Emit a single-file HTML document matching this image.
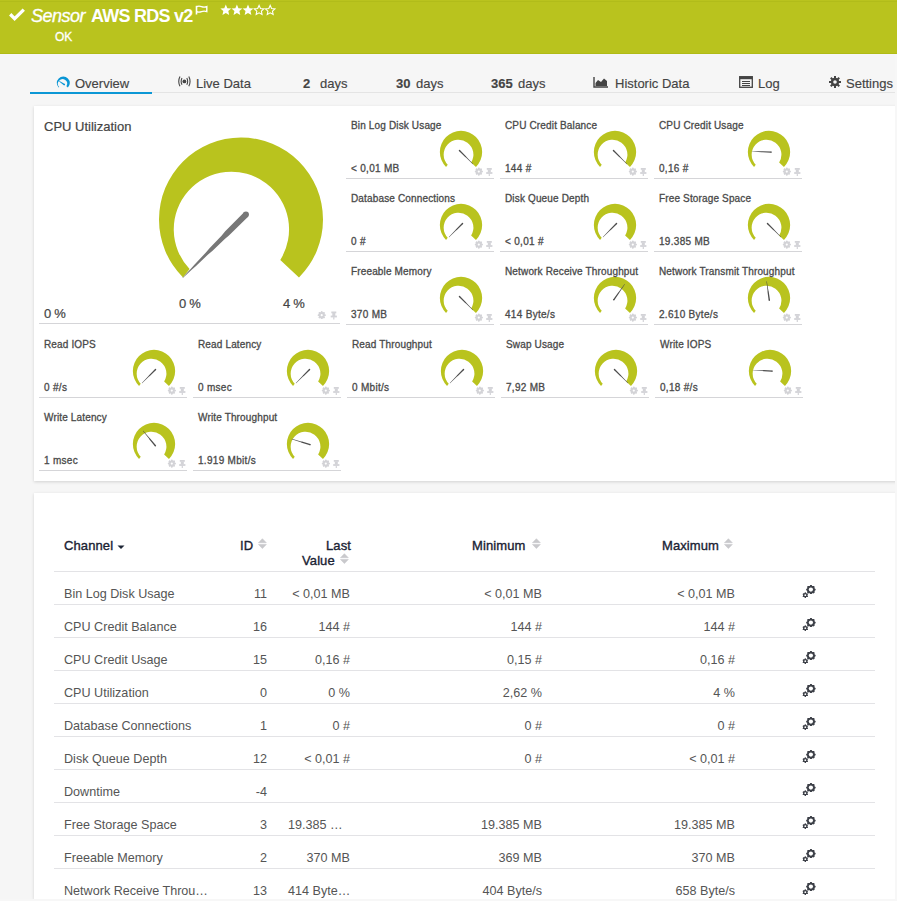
<!DOCTYPE html>
<html><head><meta charset="utf-8">
<style>
html,body{margin:0;padding:0;}
body{width:897px;height:901px;overflow:hidden;background:#f6f6f6;position:relative;font-family:"Liberation Sans",sans-serif;}
.abs{position:absolute;}
#hdr{position:absolute;left:0;top:0;width:897px;height:54px;background:#b9c31e;box-sizing:border-box;border-bottom:1px solid #b0bb16;}
#hdrl{position:absolute;left:0;top:1px;width:897px;height:1px;background:#b1bc1a;}
.wt{position:absolute;color:#fff;white-space:nowrap;line-height:1;}
.tab{position:absolute;top:77px;font-size:13px;color:#444;white-space:nowrap;line-height:1;-webkit-text-stroke:0.15px #444;}
.tab b{color:#444;}
#tabline{position:absolute;left:30px;top:92px;width:865px;height:1px;background:#e4e4e4;}
#tabsel{position:absolute;left:30px;top:92px;width:122px;height:2px;background:#0c97d5;}
.panel{position:absolute;left:34px;width:880px;background:#fff;box-shadow:0 1px 3px rgba(0,0,0,0.15);}
.gsvg{position:absolute;left:0;top:0;}
.gt{position:absolute;font-size:10px;color:#4a4a4a;white-space:nowrap;line-height:1;letter-spacing:0.15px;-webkit-text-stroke:0.3px #4a4a4a;}
.gv{position:absolute;font-size:10px;color:#4a4a4a;white-space:nowrap;line-height:1;letter-spacing:0.3px;-webkit-text-stroke:0.3px #4a4a4a;}
.big{position:absolute;font-size:13px;color:#444;white-space:nowrap;line-height:1;-webkit-text-stroke:0.2px #444;}
.th{position:absolute;font-size:13px;font-weight:normal;color:#1a2233;white-space:nowrap;line-height:1;letter-spacing:0.1px;-webkit-text-stroke:0.35px #1a2233;}
.tr{position:absolute;left:0;width:897px;height:16px;font-size:12.6px;color:#555;line-height:1;}
.tr span{position:absolute;white-space:nowrap;top:0;}
.c0{left:64px;}
.c1{right:630px;}
.c2{right:547px;}
.c3{right:355px;}
.c4{right:162px;}
</style></head><body>
<div id="hdr"></div><div id="hdrl"></div>
<svg class="abs" style="left:9px;top:8px" width="16" height="13" viewBox="0 0 16 13"><path d="M1.2 6.3 L5.6 10.6 L14.8 1.6" fill="none" stroke="#fff" stroke-width="3.3"/></svg>
<div class="wt" style="left:31px;top:7px;font-size:18px;font-style:italic;letter-spacing:-0.5px;-webkit-text-stroke:0.3px #fff;">Sensor</div>
<div class="wt" style="left:91px;top:7px;font-size:18px;font-weight:bold;letter-spacing:-0.75px;">AWS RDS v2</div>
<svg class="abs" style="left:195px;top:5px" width="14" height="10" viewBox="0 0 14 10"><path d="M1.5 0.8 V9.5" stroke="#fff" stroke-width="1.6" fill="none"/><path d="M1.5 1.6 Q4 0.6 6.5 1.6 T11.8 1.6 V6.6 Q9.2 5.6 6.5 6.6 T1.5 6.6" stroke="#fff" stroke-width="1.4" fill="none"/></svg>
<svg class="abs" style="left:220px;top:4px" width="57" height="12" viewBox="0 0 57 12"><polygon points="5.80,0.60 7.33,4.20 11.22,4.54 8.27,7.10 9.15,10.91 5.80,8.90 2.45,10.91 3.33,7.10 0.38,4.54 4.27,4.20" fill="#fff"/><polygon points="16.90,0.60 18.43,4.20 22.32,4.54 19.37,7.10 20.25,10.91 16.90,8.90 13.55,10.91 14.43,7.10 11.48,4.54 15.37,4.20" fill="#fff"/><polygon points="28.00,0.60 29.53,4.20 33.42,4.54 30.47,7.10 31.35,10.91 28.00,8.90 24.65,10.91 25.53,7.10 22.58,4.54 26.47,4.20" fill="#fff"/><polygon points="39.10,1.40 40.51,4.46 43.86,4.85 41.38,7.14 42.04,10.45 39.10,8.80 36.16,10.45 36.82,7.14 34.34,4.85 37.69,4.46" fill="none" stroke="#fff" stroke-width="1.1" stroke-linejoin="miter"/><polygon points="50.20,1.40 51.61,4.46 54.96,4.85 52.48,7.14 53.14,10.45 50.20,8.80 47.26,10.45 47.92,7.14 45.44,4.85 48.79,4.46" fill="none" stroke="#fff" stroke-width="1.1" stroke-linejoin="miter"/></svg>
<div class="wt" style="left:55px;top:31px;font-size:12px;-webkit-text-stroke:0.3px #fff;">OK</div>

<div id="tabline"></div>
<div id="tabsel"></div>
<div class="tab" style="left:75px">Overview</div>
<svg class="abs" style="left:177px;top:76px" width="15" height="11" viewBox="0 0 15 11"><circle cx="7.4" cy="5.4" r="1.9" fill="#444"/><path d="M5 2 Q3.3 5.4 5 8.8 M9.8 2 Q11.5 5.4 9.8 8.8 M3 0.6 Q0.5 5.4 3 10.2 M11.8 0.6 Q14.3 5.4 11.8 10.2" fill="none" stroke="#444" stroke-width="1.1"/></svg>
<div class="tab" style="left:196px">Live Data</div>
<div class="tab" style="left:303px"><b>2</b></div><div class="tab" style="left:320px">days</div>
<div class="tab" style="left:396px"><b>30</b></div><div class="tab" style="left:416px">days</div>
<div class="tab" style="left:491px"><b>365</b></div><div class="tab" style="left:518px">days</div>
<svg class="abs" style="left:593px;top:76px" width="16" height="12" viewBox="0 0 16 12"><path d="M1 1 V11 H15" fill="none" stroke="#444" stroke-width="1.4"/><path d="M2.5 10 V7 L5 4 L8 6 L11 2.5 L14 5 V10 Z" fill="#444"/></svg>
<div class="tab" style="left:615px">Historic Data</div>
<svg class="abs" style="left:739px;top:76px" width="14" height="12" viewBox="0 0 14 12"><rect x="0.7" y="0.7" width="12.6" height="10.6" fill="none" stroke="#444" stroke-width="1.3"/><rect x="0.7" y="0.7" width="12.6" height="2.5" fill="#444"/><path d="M3 5.5 H11 M3 7.5 H11 M3 9.5 H11" stroke="#444" stroke-width="1"/></svg>
<div class="tab" style="left:758px">Log</div>
<svg class="abs" style="left:829px;top:76px" width="12" height="12" viewBox="0 0 12 12"><g fill="#444"><circle cx="6" cy="6" r="4.2"/><rect x="5" y="0" width="2" height="12"/><rect x="5" y="0" width="2" height="12" transform="rotate(45 6 6)"/><rect x="5" y="0" width="2" height="12" transform="rotate(90 6 6)"/><rect x="5" y="0" width="2" height="12" transform="rotate(135 6 6)"/></g><circle cx="6" cy="6" r="1.8" fill="#f5f5f5"/></svg>
<div class="tab" style="left:846px">Settings</div>

<div class="panel" style="top:106px;height:375px;"></div>
<div class="panel" style="top:493px;height:406px;"></div>

<svg class="gsvg" width="897" height="901" viewBox="0 0 897 901"><path d="M58.70 87.60 A6.50 6.50 0 1 1 67.90 87.60 L66.41 86.20 A4.57 4.57 0 1 0 59.22 86.93 Z" fill="#0a96d5"/><polygon points="64.75,83.94 59.52,80.95 59.13,81.54 63.85,85.26" fill="#0a96d5"/><circle cx="64.30" cy="84.60" r="0.80" fill="#0a96d5"/><path d="M183.02 277.48 A82.00 82.00 0 1 1 298.98 277.48 L280.28 259.93 A57.65 57.65 0 1 0 189.59 269.03 Z" fill="#b9c31e"/><polygon points="243.83,212.43 224.98,231.56 221.54,235.71 209.73,247.94 205.65,252.73 194.61,264.47 191.06,268.52 182.52,277.69 182.81,277.98 191.98,269.44 196.03,265.89 207.77,254.85 212.56,250.77 224.79,238.96 228.94,235.52 248.07,216.67" fill="#777"/><circle cx="245.95" cy="214.55" r="3.00" fill="#777"/><rect x="39" y="323" width="301" height="1" fill="#d5d5d8"/><g fill="#d3d3d7"><circle cx="321.7" cy="315.2" r="3.10"/><rect x="320.95" y="311.30" width="1.50" height="7.80" rx="0.4" transform="rotate(0.0 321.7 315.2)"/><rect x="320.95" y="311.30" width="1.50" height="7.80" rx="0.4" transform="rotate(45.0 321.7 315.2)"/><rect x="320.95" y="311.30" width="1.50" height="7.80" rx="0.4" transform="rotate(90.0 321.7 315.2)"/><rect x="320.95" y="311.30" width="1.50" height="7.80" rx="0.4" transform="rotate(135.0 321.7 315.2)"/><rect x="320.95" y="311.30" width="1.50" height="7.80" rx="0.4" transform="rotate(180.0 321.7 315.2)"/><rect x="320.95" y="311.30" width="1.50" height="7.80" rx="0.4" transform="rotate(225.0 321.7 315.2)"/><rect x="320.95" y="311.30" width="1.50" height="7.80" rx="0.4" transform="rotate(270.0 321.7 315.2)"/><rect x="320.95" y="311.30" width="1.50" height="7.80" rx="0.4" transform="rotate(315.0 321.7 315.2)"/></g><circle cx="321.7" cy="315.2" r="1.10" fill="#fff"/><g fill="#d3d3d7"><rect x="331.30" y="311.50" width="5" height="1.8"/><rect x="332.30" y="313.00" width="3" height="3"/><rect x="330.70" y="315.60" width="6.2" height="1.8"/><rect x="333.20" y="317.10" width="1.2" height="2.4"/></g><path d="M446.04 166.96 A21.15 21.15 0 1 1 475.96 166.96 L471.13 162.43 A14.87 14.87 0 1 0 447.74 164.77 Z" fill="#b9c31e"/><polygon points="458.95,150.94 465.13,156.98 465.91,157.55 472.88,164.16 473.16,163.88 466.55,156.91 465.98,156.13 459.94,149.95" fill="#4d4d4d"/><circle cx="459.44" cy="150.44" r="0.70" fill="#4d4d4d"/><rect x="346" y="178" width="148" height="1" fill="#d5d5d8"/><g fill="#d3d3d7"><circle cx="478.8" cy="171.6" r="3.10"/><rect x="478.05" y="167.70" width="1.50" height="7.80" rx="0.4" transform="rotate(0.0 478.8 171.6)"/><rect x="478.05" y="167.70" width="1.50" height="7.80" rx="0.4" transform="rotate(45.0 478.8 171.6)"/><rect x="478.05" y="167.70" width="1.50" height="7.80" rx="0.4" transform="rotate(90.0 478.8 171.6)"/><rect x="478.05" y="167.70" width="1.50" height="7.80" rx="0.4" transform="rotate(135.0 478.8 171.6)"/><rect x="478.05" y="167.70" width="1.50" height="7.80" rx="0.4" transform="rotate(180.0 478.8 171.6)"/><rect x="478.05" y="167.70" width="1.50" height="7.80" rx="0.4" transform="rotate(225.0 478.8 171.6)"/><rect x="478.05" y="167.70" width="1.50" height="7.80" rx="0.4" transform="rotate(270.0 478.8 171.6)"/><rect x="478.05" y="167.70" width="1.50" height="7.80" rx="0.4" transform="rotate(315.0 478.8 171.6)"/></g><circle cx="478.8" cy="171.6" r="1.10" fill="#fff"/><g fill="#d3d3d7"><rect x="486.80" y="168.00" width="5" height="1.8"/><rect x="487.80" y="169.50" width="3" height="3"/><rect x="486.20" y="172.10" width="6.2" height="1.8"/><rect x="488.70" y="173.60" width="1.2" height="2.4"/></g><path d="M600.04 166.96 A21.15 21.15 0 1 1 629.96 166.96 L625.13 162.43 A14.87 14.87 0 1 0 601.74 164.77 Z" fill="#b9c31e"/><polygon points="612.95,150.94 619.13,156.98 619.91,157.55 626.88,164.16 627.16,163.88 620.55,156.91 619.98,156.13 613.94,149.95" fill="#4d4d4d"/><circle cx="613.44" cy="150.44" r="0.70" fill="#4d4d4d"/><rect x="500" y="178" width="148" height="1" fill="#d5d5d8"/><g fill="#d3d3d7"><circle cx="632.8" cy="171.6" r="3.10"/><rect x="632.05" y="167.70" width="1.50" height="7.80" rx="0.4" transform="rotate(0.0 632.8 171.6)"/><rect x="632.05" y="167.70" width="1.50" height="7.80" rx="0.4" transform="rotate(45.0 632.8 171.6)"/><rect x="632.05" y="167.70" width="1.50" height="7.80" rx="0.4" transform="rotate(90.0 632.8 171.6)"/><rect x="632.05" y="167.70" width="1.50" height="7.80" rx="0.4" transform="rotate(135.0 632.8 171.6)"/><rect x="632.05" y="167.70" width="1.50" height="7.80" rx="0.4" transform="rotate(180.0 632.8 171.6)"/><rect x="632.05" y="167.70" width="1.50" height="7.80" rx="0.4" transform="rotate(225.0 632.8 171.6)"/><rect x="632.05" y="167.70" width="1.50" height="7.80" rx="0.4" transform="rotate(270.0 632.8 171.6)"/><rect x="632.05" y="167.70" width="1.50" height="7.80" rx="0.4" transform="rotate(315.0 632.8 171.6)"/></g><circle cx="632.8" cy="171.6" r="1.10" fill="#fff"/><g fill="#d3d3d7"><rect x="640.80" y="168.00" width="5" height="1.8"/><rect x="641.80" y="169.50" width="3" height="3"/><rect x="640.20" y="172.10" width="6.2" height="1.8"/><rect x="642.70" y="173.60" width="1.2" height="2.4"/></g><path d="M754.04 166.96 A21.15 21.15 0 1 1 783.96 166.96 L779.13 162.43 A14.87 14.87 0 1 0 755.74 164.77 Z" fill="#b9c31e"/><polygon points="771.22,151.38 762.58,151.18 761.62,151.29 752.02,151.21 752.00,151.61 761.59,152.19 762.54,152.37 771.17,152.78" fill="#4d4d4d"/><circle cx="771.20" cy="152.08" r="0.70" fill="#4d4d4d"/><rect x="654" y="178" width="148" height="1" fill="#d5d5d8"/><g fill="#d3d3d7"><circle cx="786.8" cy="171.6" r="3.10"/><rect x="786.05" y="167.70" width="1.50" height="7.80" rx="0.4" transform="rotate(0.0 786.8 171.6)"/><rect x="786.05" y="167.70" width="1.50" height="7.80" rx="0.4" transform="rotate(45.0 786.8 171.6)"/><rect x="786.05" y="167.70" width="1.50" height="7.80" rx="0.4" transform="rotate(90.0 786.8 171.6)"/><rect x="786.05" y="167.70" width="1.50" height="7.80" rx="0.4" transform="rotate(135.0 786.8 171.6)"/><rect x="786.05" y="167.70" width="1.50" height="7.80" rx="0.4" transform="rotate(180.0 786.8 171.6)"/><rect x="786.05" y="167.70" width="1.50" height="7.80" rx="0.4" transform="rotate(225.0 786.8 171.6)"/><rect x="786.05" y="167.70" width="1.50" height="7.80" rx="0.4" transform="rotate(270.0 786.8 171.6)"/><rect x="786.05" y="167.70" width="1.50" height="7.80" rx="0.4" transform="rotate(315.0 786.8 171.6)"/></g><circle cx="786.8" cy="171.6" r="1.10" fill="#fff"/><g fill="#d3d3d7"><rect x="794.80" y="168.00" width="5" height="1.8"/><rect x="795.80" y="169.50" width="3" height="3"/><rect x="794.20" y="172.10" width="6.2" height="1.8"/><rect x="796.70" y="173.60" width="1.2" height="2.4"/></g><path d="M446.04 239.96 A21.15 21.15 0 1 1 475.96 239.96 L471.13 235.43 A14.87 14.87 0 1 0 447.74 237.77 Z" fill="#b9c31e"/><polygon points="462.06,222.95 456.02,229.13 455.45,229.91 448.84,236.88 449.12,237.16 456.09,230.55 456.87,229.98 463.05,223.94" fill="#4d4d4d"/><circle cx="462.56" cy="223.44" r="0.70" fill="#4d4d4d"/><rect x="346" y="251" width="148" height="1" fill="#d5d5d8"/><g fill="#d3d3d7"><circle cx="478.8" cy="244.6" r="3.10"/><rect x="478.05" y="240.70" width="1.50" height="7.80" rx="0.4" transform="rotate(0.0 478.8 244.6)"/><rect x="478.05" y="240.70" width="1.50" height="7.80" rx="0.4" transform="rotate(45.0 478.8 244.6)"/><rect x="478.05" y="240.70" width="1.50" height="7.80" rx="0.4" transform="rotate(90.0 478.8 244.6)"/><rect x="478.05" y="240.70" width="1.50" height="7.80" rx="0.4" transform="rotate(135.0 478.8 244.6)"/><rect x="478.05" y="240.70" width="1.50" height="7.80" rx="0.4" transform="rotate(180.0 478.8 244.6)"/><rect x="478.05" y="240.70" width="1.50" height="7.80" rx="0.4" transform="rotate(225.0 478.8 244.6)"/><rect x="478.05" y="240.70" width="1.50" height="7.80" rx="0.4" transform="rotate(270.0 478.8 244.6)"/><rect x="478.05" y="240.70" width="1.50" height="7.80" rx="0.4" transform="rotate(315.0 478.8 244.6)"/></g><circle cx="478.8" cy="244.6" r="1.10" fill="#fff"/><g fill="#d3d3d7"><rect x="486.80" y="241.00" width="5" height="1.8"/><rect x="487.80" y="242.50" width="3" height="3"/><rect x="486.20" y="245.10" width="6.2" height="1.8"/><rect x="488.70" y="246.60" width="1.2" height="2.4"/></g><path d="M600.04 239.96 A21.15 21.15 0 1 1 629.96 239.96 L625.13 235.43 A14.87 14.87 0 1 0 601.74 237.77 Z" fill="#b9c31e"/><polygon points="616.06,222.95 610.02,229.13 609.45,229.91 602.84,236.88 603.12,237.16 610.09,230.55 610.87,229.98 617.05,223.94" fill="#4d4d4d"/><circle cx="616.56" cy="223.44" r="0.70" fill="#4d4d4d"/><rect x="500" y="251" width="148" height="1" fill="#d5d5d8"/><g fill="#d3d3d7"><circle cx="632.8" cy="244.6" r="3.10"/><rect x="632.05" y="240.70" width="1.50" height="7.80" rx="0.4" transform="rotate(0.0 632.8 244.6)"/><rect x="632.05" y="240.70" width="1.50" height="7.80" rx="0.4" transform="rotate(45.0 632.8 244.6)"/><rect x="632.05" y="240.70" width="1.50" height="7.80" rx="0.4" transform="rotate(90.0 632.8 244.6)"/><rect x="632.05" y="240.70" width="1.50" height="7.80" rx="0.4" transform="rotate(135.0 632.8 244.6)"/><rect x="632.05" y="240.70" width="1.50" height="7.80" rx="0.4" transform="rotate(180.0 632.8 244.6)"/><rect x="632.05" y="240.70" width="1.50" height="7.80" rx="0.4" transform="rotate(225.0 632.8 244.6)"/><rect x="632.05" y="240.70" width="1.50" height="7.80" rx="0.4" transform="rotate(270.0 632.8 244.6)"/><rect x="632.05" y="240.70" width="1.50" height="7.80" rx="0.4" transform="rotate(315.0 632.8 244.6)"/></g><circle cx="632.8" cy="244.6" r="1.10" fill="#fff"/><g fill="#d3d3d7"><rect x="640.80" y="241.00" width="5" height="1.8"/><rect x="641.80" y="242.50" width="3" height="3"/><rect x="640.20" y="245.10" width="6.2" height="1.8"/><rect x="642.70" y="246.60" width="1.2" height="2.4"/></g><path d="M754.04 239.96 A21.15 21.15 0 1 1 783.96 239.96 L779.13 235.43 A14.87 14.87 0 1 0 755.74 237.77 Z" fill="#b9c31e"/><polygon points="766.95,223.94 773.13,229.98 773.91,230.55 780.88,237.16 781.16,236.88 774.55,229.91 773.98,229.13 767.94,222.95" fill="#4d4d4d"/><circle cx="767.44" cy="223.44" r="0.70" fill="#4d4d4d"/><rect x="654" y="251" width="148" height="1" fill="#d5d5d8"/><g fill="#d3d3d7"><circle cx="786.8" cy="244.6" r="3.10"/><rect x="786.05" y="240.70" width="1.50" height="7.80" rx="0.4" transform="rotate(0.0 786.8 244.6)"/><rect x="786.05" y="240.70" width="1.50" height="7.80" rx="0.4" transform="rotate(45.0 786.8 244.6)"/><rect x="786.05" y="240.70" width="1.50" height="7.80" rx="0.4" transform="rotate(90.0 786.8 244.6)"/><rect x="786.05" y="240.70" width="1.50" height="7.80" rx="0.4" transform="rotate(135.0 786.8 244.6)"/><rect x="786.05" y="240.70" width="1.50" height="7.80" rx="0.4" transform="rotate(180.0 786.8 244.6)"/><rect x="786.05" y="240.70" width="1.50" height="7.80" rx="0.4" transform="rotate(225.0 786.8 244.6)"/><rect x="786.05" y="240.70" width="1.50" height="7.80" rx="0.4" transform="rotate(270.0 786.8 244.6)"/><rect x="786.05" y="240.70" width="1.50" height="7.80" rx="0.4" transform="rotate(315.0 786.8 244.6)"/></g><circle cx="786.8" cy="244.6" r="1.10" fill="#fff"/><g fill="#d3d3d7"><rect x="794.80" y="241.00" width="5" height="1.8"/><rect x="795.80" y="242.50" width="3" height="3"/><rect x="794.20" y="245.10" width="6.2" height="1.8"/><rect x="796.70" y="246.60" width="1.2" height="2.4"/></g><path d="M446.04 312.96 A21.15 21.15 0 1 1 475.96 312.96 L471.13 308.43 A14.87 14.87 0 1 0 447.74 310.77 Z" fill="#b9c31e"/><polygon points="458.95,296.94 465.13,302.98 465.91,303.55 472.88,310.16 473.16,309.88 466.55,302.91 465.98,302.13 459.94,295.95" fill="#4d4d4d"/><circle cx="459.44" cy="296.44" r="0.70" fill="#4d4d4d"/><rect x="346" y="324" width="148" height="1" fill="#d5d5d8"/><g fill="#d3d3d7"><circle cx="478.8" cy="317.6" r="3.10"/><rect x="478.05" y="313.70" width="1.50" height="7.80" rx="0.4" transform="rotate(0.0 478.8 317.6)"/><rect x="478.05" y="313.70" width="1.50" height="7.80" rx="0.4" transform="rotate(45.0 478.8 317.6)"/><rect x="478.05" y="313.70" width="1.50" height="7.80" rx="0.4" transform="rotate(90.0 478.8 317.6)"/><rect x="478.05" y="313.70" width="1.50" height="7.80" rx="0.4" transform="rotate(135.0 478.8 317.6)"/><rect x="478.05" y="313.70" width="1.50" height="7.80" rx="0.4" transform="rotate(180.0 478.8 317.6)"/><rect x="478.05" y="313.70" width="1.50" height="7.80" rx="0.4" transform="rotate(225.0 478.8 317.6)"/><rect x="478.05" y="313.70" width="1.50" height="7.80" rx="0.4" transform="rotate(270.0 478.8 317.6)"/><rect x="478.05" y="313.70" width="1.50" height="7.80" rx="0.4" transform="rotate(315.0 478.8 317.6)"/></g><circle cx="478.8" cy="317.6" r="1.10" fill="#fff"/><g fill="#d3d3d7"><rect x="486.80" y="314.00" width="5" height="1.8"/><rect x="487.80" y="315.50" width="3" height="3"/><rect x="486.20" y="318.10" width="6.2" height="1.8"/><rect x="488.70" y="319.60" width="1.2" height="2.4"/></g><path d="M600.04 312.96 A21.15 21.15 0 1 1 629.96 312.96 L625.13 308.43 A14.87 14.87 0 1 0 601.74 310.77 Z" fill="#b9c31e"/><polygon points="614.31,300.20 619.19,293.07 619.61,292.20 624.91,284.19 624.59,283.96 618.88,291.68 618.20,292.38 613.16,299.40" fill="#4d4d4d"/><circle cx="613.74" cy="299.80" r="0.70" fill="#4d4d4d"/><rect x="500" y="324" width="148" height="1" fill="#d5d5d8"/><g fill="#d3d3d7"><circle cx="632.8" cy="317.6" r="3.10"/><rect x="632.05" y="313.70" width="1.50" height="7.80" rx="0.4" transform="rotate(0.0 632.8 317.6)"/><rect x="632.05" y="313.70" width="1.50" height="7.80" rx="0.4" transform="rotate(45.0 632.8 317.6)"/><rect x="632.05" y="313.70" width="1.50" height="7.80" rx="0.4" transform="rotate(90.0 632.8 317.6)"/><rect x="632.05" y="313.70" width="1.50" height="7.80" rx="0.4" transform="rotate(135.0 632.8 317.6)"/><rect x="632.05" y="313.70" width="1.50" height="7.80" rx="0.4" transform="rotate(180.0 632.8 317.6)"/><rect x="632.05" y="313.70" width="1.50" height="7.80" rx="0.4" transform="rotate(225.0 632.8 317.6)"/><rect x="632.05" y="313.70" width="1.50" height="7.80" rx="0.4" transform="rotate(270.0 632.8 317.6)"/><rect x="632.05" y="313.70" width="1.50" height="7.80" rx="0.4" transform="rotate(315.0 632.8 317.6)"/></g><circle cx="632.8" cy="317.6" r="1.10" fill="#fff"/><g fill="#d3d3d7"><rect x="640.80" y="314.00" width="5" height="1.8"/><rect x="641.80" y="315.50" width="3" height="3"/><rect x="640.20" y="318.10" width="6.2" height="1.8"/><rect x="642.70" y="319.60" width="1.2" height="2.4"/></g><path d="M754.04 312.96 A21.15 21.15 0 1 1 783.96 312.96 L779.13 308.43 A14.87 14.87 0 1 0 755.74 310.77 Z" fill="#b9c31e"/><polygon points="770.00,300.08 768.70,291.54 768.42,290.61 766.83,281.14 766.44,281.19 767.52,290.73 767.51,291.71 768.61,300.28" fill="#4d4d4d"/><circle cx="769.31" cy="300.18" r="0.70" fill="#4d4d4d"/><rect x="654" y="324" width="148" height="1" fill="#d5d5d8"/><g fill="#d3d3d7"><circle cx="786.8" cy="317.6" r="3.10"/><rect x="786.05" y="313.70" width="1.50" height="7.80" rx="0.4" transform="rotate(0.0 786.8 317.6)"/><rect x="786.05" y="313.70" width="1.50" height="7.80" rx="0.4" transform="rotate(45.0 786.8 317.6)"/><rect x="786.05" y="313.70" width="1.50" height="7.80" rx="0.4" transform="rotate(90.0 786.8 317.6)"/><rect x="786.05" y="313.70" width="1.50" height="7.80" rx="0.4" transform="rotate(135.0 786.8 317.6)"/><rect x="786.05" y="313.70" width="1.50" height="7.80" rx="0.4" transform="rotate(180.0 786.8 317.6)"/><rect x="786.05" y="313.70" width="1.50" height="7.80" rx="0.4" transform="rotate(225.0 786.8 317.6)"/><rect x="786.05" y="313.70" width="1.50" height="7.80" rx="0.4" transform="rotate(270.0 786.8 317.6)"/><rect x="786.05" y="313.70" width="1.50" height="7.80" rx="0.4" transform="rotate(315.0 786.8 317.6)"/></g><circle cx="786.8" cy="317.6" r="1.10" fill="#fff"/><g fill="#d3d3d7"><rect x="794.80" y="314.00" width="5" height="1.8"/><rect x="795.80" y="315.50" width="3" height="3"/><rect x="794.20" y="318.10" width="6.2" height="1.8"/><rect x="796.70" y="319.60" width="1.2" height="2.4"/></g><path d="M139.04 385.96 A21.15 21.15 0 1 1 168.96 385.96 L164.13 381.43 A14.87 14.87 0 1 0 140.74 383.77 Z" fill="#b9c31e"/><polygon points="155.06,368.95 149.02,375.13 148.45,375.91 141.84,382.88 142.12,383.16 149.09,376.55 149.87,375.98 156.05,369.94" fill="#4d4d4d"/><circle cx="155.56" cy="369.44" r="0.70" fill="#4d4d4d"/><rect x="39" y="397" width="148" height="1" fill="#d5d5d8"/><g fill="#d3d3d7"><circle cx="171.8" cy="390.6" r="3.10"/><rect x="171.05" y="386.70" width="1.50" height="7.80" rx="0.4" transform="rotate(0.0 171.8 390.6)"/><rect x="171.05" y="386.70" width="1.50" height="7.80" rx="0.4" transform="rotate(45.0 171.8 390.6)"/><rect x="171.05" y="386.70" width="1.50" height="7.80" rx="0.4" transform="rotate(90.0 171.8 390.6)"/><rect x="171.05" y="386.70" width="1.50" height="7.80" rx="0.4" transform="rotate(135.0 171.8 390.6)"/><rect x="171.05" y="386.70" width="1.50" height="7.80" rx="0.4" transform="rotate(180.0 171.8 390.6)"/><rect x="171.05" y="386.70" width="1.50" height="7.80" rx="0.4" transform="rotate(225.0 171.8 390.6)"/><rect x="171.05" y="386.70" width="1.50" height="7.80" rx="0.4" transform="rotate(270.0 171.8 390.6)"/><rect x="171.05" y="386.70" width="1.50" height="7.80" rx="0.4" transform="rotate(315.0 171.8 390.6)"/></g><circle cx="171.8" cy="390.6" r="1.10" fill="#fff"/><g fill="#d3d3d7"><rect x="179.80" y="387.00" width="5" height="1.8"/><rect x="180.80" y="388.50" width="3" height="3"/><rect x="179.20" y="391.10" width="6.2" height="1.8"/><rect x="181.70" y="392.60" width="1.2" height="2.4"/></g><path d="M293.04 385.96 A21.15 21.15 0 1 1 322.96 385.96 L318.13 381.43 A14.87 14.87 0 1 0 294.74 383.77 Z" fill="#b9c31e"/><polygon points="309.06,368.95 303.02,375.13 302.45,375.91 295.84,382.88 296.12,383.16 303.09,376.55 303.87,375.98 310.05,369.94" fill="#4d4d4d"/><circle cx="309.56" cy="369.44" r="0.70" fill="#4d4d4d"/><rect x="193" y="397" width="148" height="1" fill="#d5d5d8"/><g fill="#d3d3d7"><circle cx="325.8" cy="390.6" r="3.10"/><rect x="325.05" y="386.70" width="1.50" height="7.80" rx="0.4" transform="rotate(0.0 325.8 390.6)"/><rect x="325.05" y="386.70" width="1.50" height="7.80" rx="0.4" transform="rotate(45.0 325.8 390.6)"/><rect x="325.05" y="386.70" width="1.50" height="7.80" rx="0.4" transform="rotate(90.0 325.8 390.6)"/><rect x="325.05" y="386.70" width="1.50" height="7.80" rx="0.4" transform="rotate(135.0 325.8 390.6)"/><rect x="325.05" y="386.70" width="1.50" height="7.80" rx="0.4" transform="rotate(180.0 325.8 390.6)"/><rect x="325.05" y="386.70" width="1.50" height="7.80" rx="0.4" transform="rotate(225.0 325.8 390.6)"/><rect x="325.05" y="386.70" width="1.50" height="7.80" rx="0.4" transform="rotate(270.0 325.8 390.6)"/><rect x="325.05" y="386.70" width="1.50" height="7.80" rx="0.4" transform="rotate(315.0 325.8 390.6)"/></g><circle cx="325.8" cy="390.6" r="1.10" fill="#fff"/><g fill="#d3d3d7"><rect x="333.80" y="387.00" width="5" height="1.8"/><rect x="334.80" y="388.50" width="3" height="3"/><rect x="333.20" y="391.10" width="6.2" height="1.8"/><rect x="335.70" y="392.60" width="1.2" height="2.4"/></g><path d="M447.04 385.96 A21.15 21.15 0 1 1 476.96 385.96 L472.13 381.43 A14.87 14.87 0 1 0 448.74 383.77 Z" fill="#b9c31e"/><polygon points="463.06,368.95 457.02,375.13 456.45,375.91 449.84,382.88 450.12,383.16 457.09,376.55 457.87,375.98 464.05,369.94" fill="#4d4d4d"/><circle cx="463.56" cy="369.44" r="0.70" fill="#4d4d4d"/><rect x="347" y="397" width="148" height="1" fill="#d5d5d8"/><g fill="#d3d3d7"><circle cx="479.8" cy="390.6" r="3.10"/><rect x="479.05" y="386.70" width="1.50" height="7.80" rx="0.4" transform="rotate(0.0 479.8 390.6)"/><rect x="479.05" y="386.70" width="1.50" height="7.80" rx="0.4" transform="rotate(45.0 479.8 390.6)"/><rect x="479.05" y="386.70" width="1.50" height="7.80" rx="0.4" transform="rotate(90.0 479.8 390.6)"/><rect x="479.05" y="386.70" width="1.50" height="7.80" rx="0.4" transform="rotate(135.0 479.8 390.6)"/><rect x="479.05" y="386.70" width="1.50" height="7.80" rx="0.4" transform="rotate(180.0 479.8 390.6)"/><rect x="479.05" y="386.70" width="1.50" height="7.80" rx="0.4" transform="rotate(225.0 479.8 390.6)"/><rect x="479.05" y="386.70" width="1.50" height="7.80" rx="0.4" transform="rotate(270.0 479.8 390.6)"/><rect x="479.05" y="386.70" width="1.50" height="7.80" rx="0.4" transform="rotate(315.0 479.8 390.6)"/></g><circle cx="479.8" cy="390.6" r="1.10" fill="#fff"/><g fill="#d3d3d7"><rect x="487.80" y="387.00" width="5" height="1.8"/><rect x="488.80" y="388.50" width="3" height="3"/><rect x="487.20" y="391.10" width="6.2" height="1.8"/><rect x="489.70" y="392.60" width="1.2" height="2.4"/></g><path d="M601.04 385.96 A21.15 21.15 0 1 1 630.96 385.96 L626.13 381.43 A14.87 14.87 0 1 0 602.74 383.77 Z" fill="#b9c31e"/><polygon points="613.95,369.94 620.13,375.98 620.91,376.55 627.88,383.16 628.16,382.88 621.55,375.91 620.98,375.13 614.94,368.95" fill="#4d4d4d"/><circle cx="614.44" cy="369.44" r="0.70" fill="#4d4d4d"/><rect x="501" y="397" width="148" height="1" fill="#d5d5d8"/><g fill="#d3d3d7"><circle cx="633.8" cy="390.6" r="3.10"/><rect x="633.05" y="386.70" width="1.50" height="7.80" rx="0.4" transform="rotate(0.0 633.8 390.6)"/><rect x="633.05" y="386.70" width="1.50" height="7.80" rx="0.4" transform="rotate(45.0 633.8 390.6)"/><rect x="633.05" y="386.70" width="1.50" height="7.80" rx="0.4" transform="rotate(90.0 633.8 390.6)"/><rect x="633.05" y="386.70" width="1.50" height="7.80" rx="0.4" transform="rotate(135.0 633.8 390.6)"/><rect x="633.05" y="386.70" width="1.50" height="7.80" rx="0.4" transform="rotate(180.0 633.8 390.6)"/><rect x="633.05" y="386.70" width="1.50" height="7.80" rx="0.4" transform="rotate(225.0 633.8 390.6)"/><rect x="633.05" y="386.70" width="1.50" height="7.80" rx="0.4" transform="rotate(270.0 633.8 390.6)"/><rect x="633.05" y="386.70" width="1.50" height="7.80" rx="0.4" transform="rotate(315.0 633.8 390.6)"/></g><circle cx="633.8" cy="390.6" r="1.10" fill="#fff"/><g fill="#d3d3d7"><rect x="641.80" y="387.00" width="5" height="1.8"/><rect x="642.80" y="388.50" width="3" height="3"/><rect x="641.20" y="391.10" width="6.2" height="1.8"/><rect x="643.70" y="392.60" width="1.2" height="2.4"/></g><path d="M755.04 385.96 A21.15 21.15 0 1 1 784.96 385.96 L780.13 381.43 A14.87 14.87 0 1 0 756.74 383.77 Z" fill="#b9c31e"/><polygon points="772.23,370.42 763.60,370.06 762.63,370.16 753.03,369.91 753.01,370.31 762.59,371.06 763.54,371.26 772.16,371.81" fill="#4d4d4d"/><circle cx="772.20" cy="371.12" r="0.70" fill="#4d4d4d"/><rect x="655" y="397" width="148" height="1" fill="#d5d5d8"/><g fill="#d3d3d7"><circle cx="787.8" cy="390.6" r="3.10"/><rect x="787.05" y="386.70" width="1.50" height="7.80" rx="0.4" transform="rotate(0.0 787.8 390.6)"/><rect x="787.05" y="386.70" width="1.50" height="7.80" rx="0.4" transform="rotate(45.0 787.8 390.6)"/><rect x="787.05" y="386.70" width="1.50" height="7.80" rx="0.4" transform="rotate(90.0 787.8 390.6)"/><rect x="787.05" y="386.70" width="1.50" height="7.80" rx="0.4" transform="rotate(135.0 787.8 390.6)"/><rect x="787.05" y="386.70" width="1.50" height="7.80" rx="0.4" transform="rotate(180.0 787.8 390.6)"/><rect x="787.05" y="386.70" width="1.50" height="7.80" rx="0.4" transform="rotate(225.0 787.8 390.6)"/><rect x="787.05" y="386.70" width="1.50" height="7.80" rx="0.4" transform="rotate(270.0 787.8 390.6)"/><rect x="787.05" y="386.70" width="1.50" height="7.80" rx="0.4" transform="rotate(315.0 787.8 390.6)"/></g><circle cx="787.8" cy="390.6" r="1.10" fill="#fff"/><g fill="#d3d3d7"><rect x="795.80" y="387.00" width="5" height="1.8"/><rect x="796.80" y="388.50" width="3" height="3"/><rect x="795.20" y="391.10" width="6.2" height="1.8"/><rect x="797.70" y="392.60" width="1.2" height="2.4"/></g><path d="M139.04 458.96 A21.15 21.15 0 1 1 168.96 458.96 L164.13 454.43 A14.87 14.87 0 1 0 140.74 456.77 Z" fill="#b9c31e"/><polygon points="155.95,445.24 150.32,438.68 149.59,438.04 143.23,430.85 142.92,431.11 148.90,438.62 149.40,439.45 154.88,446.14" fill="#4d4d4d"/><circle cx="155.41" cy="445.69" r="0.70" fill="#4d4d4d"/><rect x="39" y="470" width="148" height="1" fill="#d5d5d8"/><g fill="#d3d3d7"><circle cx="171.8" cy="463.6" r="3.10"/><rect x="171.05" y="459.70" width="1.50" height="7.80" rx="0.4" transform="rotate(0.0 171.8 463.6)"/><rect x="171.05" y="459.70" width="1.50" height="7.80" rx="0.4" transform="rotate(45.0 171.8 463.6)"/><rect x="171.05" y="459.70" width="1.50" height="7.80" rx="0.4" transform="rotate(90.0 171.8 463.6)"/><rect x="171.05" y="459.70" width="1.50" height="7.80" rx="0.4" transform="rotate(135.0 171.8 463.6)"/><rect x="171.05" y="459.70" width="1.50" height="7.80" rx="0.4" transform="rotate(180.0 171.8 463.6)"/><rect x="171.05" y="459.70" width="1.50" height="7.80" rx="0.4" transform="rotate(225.0 171.8 463.6)"/><rect x="171.05" y="459.70" width="1.50" height="7.80" rx="0.4" transform="rotate(270.0 171.8 463.6)"/><rect x="171.05" y="459.70" width="1.50" height="7.80" rx="0.4" transform="rotate(315.0 171.8 463.6)"/></g><circle cx="171.8" cy="463.6" r="1.10" fill="#fff"/><g fill="#d3d3d7"><rect x="179.80" y="460.00" width="5" height="1.8"/><rect x="180.80" y="461.50" width="3" height="3"/><rect x="179.20" y="464.10" width="6.2" height="1.8"/><rect x="181.70" y="465.60" width="1.2" height="2.4"/></g><path d="M293.04 458.96 A21.15 21.15 0 1 1 322.96 458.96 L318.13 454.43 A14.87 14.87 0 1 0 294.74 456.77 Z" fill="#b9c31e"/><polygon points="310.31,443.97 302.02,441.54 301.05,441.41 291.80,438.84 291.68,439.22 300.79,442.27 301.67,442.69 309.90,445.31" fill="#4d4d4d"/><circle cx="310.10" cy="444.64" r="0.70" fill="#4d4d4d"/><rect x="193" y="470" width="148" height="1" fill="#d5d5d8"/><g fill="#d3d3d7"><circle cx="325.8" cy="463.6" r="3.10"/><rect x="325.05" y="459.70" width="1.50" height="7.80" rx="0.4" transform="rotate(0.0 325.8 463.6)"/><rect x="325.05" y="459.70" width="1.50" height="7.80" rx="0.4" transform="rotate(45.0 325.8 463.6)"/><rect x="325.05" y="459.70" width="1.50" height="7.80" rx="0.4" transform="rotate(90.0 325.8 463.6)"/><rect x="325.05" y="459.70" width="1.50" height="7.80" rx="0.4" transform="rotate(135.0 325.8 463.6)"/><rect x="325.05" y="459.70" width="1.50" height="7.80" rx="0.4" transform="rotate(180.0 325.8 463.6)"/><rect x="325.05" y="459.70" width="1.50" height="7.80" rx="0.4" transform="rotate(225.0 325.8 463.6)"/><rect x="325.05" y="459.70" width="1.50" height="7.80" rx="0.4" transform="rotate(270.0 325.8 463.6)"/><rect x="325.05" y="459.70" width="1.50" height="7.80" rx="0.4" transform="rotate(315.0 325.8 463.6)"/></g><circle cx="325.8" cy="463.6" r="1.10" fill="#fff"/><g fill="#d3d3d7"><rect x="333.80" y="460.00" width="5" height="1.8"/><rect x="334.80" y="461.50" width="3" height="3"/><rect x="333.20" y="464.10" width="6.2" height="1.8"/><rect x="335.70" y="465.60" width="1.2" height="2.4"/></g></svg>
<div class="big" style="left:44px;top:120px;">CPU Utilization</div>
<div class="big" style="left:44px;top:307px;letter-spacing:-0.3px;">0 %</div>
<div class="big" style="left:179px;top:297px;letter-spacing:-0.3px;">0 %</div>
<div class="big" style="left:283px;top:297px;letter-spacing:-0.3px;">4 %</div>
<div class="gt" style="left:351px;top:121.2px">Bin Log Disk Usage</div>
<div class="gv" style="left:351px;top:164.2px">< 0,01 MB</div>
<div class="gt" style="left:505px;top:121.2px">CPU Credit Balance</div>
<div class="gv" style="left:505px;top:164.2px">144 #</div>
<div class="gt" style="left:659px;top:121.2px">CPU Credit Usage</div>
<div class="gv" style="left:659px;top:164.2px">0,16 #</div>
<div class="gt" style="left:351px;top:194.2px">Database Connections</div>
<div class="gv" style="left:351px;top:237.2px">0 #</div>
<div class="gt" style="left:505px;top:194.2px">Disk Queue Depth</div>
<div class="gv" style="left:505px;top:237.2px">< 0,01 #</div>
<div class="gt" style="left:659px;top:194.2px">Free Storage Space</div>
<div class="gv" style="left:659px;top:237.2px">19.385 MB</div>
<div class="gt" style="left:351px;top:267.2px">Freeable Memory</div>
<div class="gv" style="left:351px;top:310.2px">370 MB</div>
<div class="gt" style="left:505px;top:267.2px">Network Receive Throughput</div>
<div class="gv" style="left:505px;top:310.2px">414 Byte/s</div>
<div class="gt" style="left:659px;top:267.2px">Network Transmit Throughput</div>
<div class="gv" style="left:659px;top:310.2px">2.610 Byte/s</div>
<div class="gt" style="left:44px;top:340.2px">Read IOPS</div>
<div class="gv" style="left:44px;top:383.2px">0 #/s</div>
<div class="gt" style="left:198px;top:340.2px">Read Latency</div>
<div class="gv" style="left:198px;top:383.2px">0 msec</div>
<div class="gt" style="left:352px;top:340.2px">Read Throughput</div>
<div class="gv" style="left:352px;top:383.2px">0 Mbit/s</div>
<div class="gt" style="left:506px;top:340.2px">Swap Usage</div>
<div class="gv" style="left:506px;top:383.2px">7,92 MB</div>
<div class="gt" style="left:660px;top:340.2px">Write IOPS</div>
<div class="gv" style="left:660px;top:383.2px">0,18 #/s</div>
<div class="gt" style="left:44px;top:413.2px">Write Latency</div>
<div class="gv" style="left:44px;top:456.2px">1 msec</div>
<div class="gt" style="left:198px;top:413.2px">Write Throughput</div>
<div class="gv" style="left:198px;top:456.2px">1.919 Mbit/s</div>

<svg class="gsvg" width="897" height="901" viewBox="0 0 897 901"><rect x="54" y="604" width="821" height="1" fill="#e3e3e6"/><g fill="#3d4048"><circle cx="810.9" cy="589.6" r="3.90"/><rect x="810.00" y="585.10" width="1.80" height="9.00" rx="0.4" transform="rotate(0.0 810.9 589.6)"/><rect x="810.00" y="585.10" width="1.80" height="9.00" rx="0.4" transform="rotate(45.0 810.9 589.6)"/><rect x="810.00" y="585.10" width="1.80" height="9.00" rx="0.4" transform="rotate(90.0 810.9 589.6)"/><rect x="810.00" y="585.10" width="1.80" height="9.00" rx="0.4" transform="rotate(135.0 810.9 589.6)"/><rect x="810.00" y="585.10" width="1.80" height="9.00" rx="0.4" transform="rotate(180.0 810.9 589.6)"/><rect x="810.00" y="585.10" width="1.80" height="9.00" rx="0.4" transform="rotate(225.0 810.9 589.6)"/><rect x="810.00" y="585.10" width="1.80" height="9.00" rx="0.4" transform="rotate(270.0 810.9 589.6)"/><rect x="810.00" y="585.10" width="1.80" height="9.00" rx="0.4" transform="rotate(315.0 810.9 589.6)"/></g><circle cx="810.9" cy="589.6" r="2.10" fill="#fff"/><g fill="#3d4048"><circle cx="805.3" cy="595.2" r="2.10"/><rect x="804.70" y="592.40" width="1.20" height="5.60" rx="0.4" transform="rotate(0.0 805.3 595.2)"/><rect x="804.70" y="592.40" width="1.20" height="5.60" rx="0.4" transform="rotate(60.0 805.3 595.2)"/><rect x="804.70" y="592.40" width="1.20" height="5.60" rx="0.4" transform="rotate(120.0 805.3 595.2)"/><rect x="804.70" y="592.40" width="1.20" height="5.60" rx="0.4" transform="rotate(180.0 805.3 595.2)"/><rect x="804.70" y="592.40" width="1.20" height="5.60" rx="0.4" transform="rotate(240.0 805.3 595.2)"/><rect x="804.70" y="592.40" width="1.20" height="5.60" rx="0.4" transform="rotate(300.0 805.3 595.2)"/></g><circle cx="805.3" cy="595.2" r="0.90" fill="#fff"/><rect x="54" y="637" width="821" height="1" fill="#e3e3e6"/><g fill="#3d4048"><circle cx="810.9" cy="622.6" r="3.90"/><rect x="810.00" y="618.10" width="1.80" height="9.00" rx="0.4" transform="rotate(0.0 810.9 622.6)"/><rect x="810.00" y="618.10" width="1.80" height="9.00" rx="0.4" transform="rotate(45.0 810.9 622.6)"/><rect x="810.00" y="618.10" width="1.80" height="9.00" rx="0.4" transform="rotate(90.0 810.9 622.6)"/><rect x="810.00" y="618.10" width="1.80" height="9.00" rx="0.4" transform="rotate(135.0 810.9 622.6)"/><rect x="810.00" y="618.10" width="1.80" height="9.00" rx="0.4" transform="rotate(180.0 810.9 622.6)"/><rect x="810.00" y="618.10" width="1.80" height="9.00" rx="0.4" transform="rotate(225.0 810.9 622.6)"/><rect x="810.00" y="618.10" width="1.80" height="9.00" rx="0.4" transform="rotate(270.0 810.9 622.6)"/><rect x="810.00" y="618.10" width="1.80" height="9.00" rx="0.4" transform="rotate(315.0 810.9 622.6)"/></g><circle cx="810.9" cy="622.6" r="2.10" fill="#fff"/><g fill="#3d4048"><circle cx="805.3" cy="628.2" r="2.10"/><rect x="804.70" y="625.40" width="1.20" height="5.60" rx="0.4" transform="rotate(0.0 805.3 628.2)"/><rect x="804.70" y="625.40" width="1.20" height="5.60" rx="0.4" transform="rotate(60.0 805.3 628.2)"/><rect x="804.70" y="625.40" width="1.20" height="5.60" rx="0.4" transform="rotate(120.0 805.3 628.2)"/><rect x="804.70" y="625.40" width="1.20" height="5.60" rx="0.4" transform="rotate(180.0 805.3 628.2)"/><rect x="804.70" y="625.40" width="1.20" height="5.60" rx="0.4" transform="rotate(240.0 805.3 628.2)"/><rect x="804.70" y="625.40" width="1.20" height="5.60" rx="0.4" transform="rotate(300.0 805.3 628.2)"/></g><circle cx="805.3" cy="628.2" r="0.90" fill="#fff"/><rect x="54" y="670" width="821" height="1" fill="#e3e3e6"/><g fill="#3d4048"><circle cx="810.9" cy="655.6" r="3.90"/><rect x="810.00" y="651.10" width="1.80" height="9.00" rx="0.4" transform="rotate(0.0 810.9 655.6)"/><rect x="810.00" y="651.10" width="1.80" height="9.00" rx="0.4" transform="rotate(45.0 810.9 655.6)"/><rect x="810.00" y="651.10" width="1.80" height="9.00" rx="0.4" transform="rotate(90.0 810.9 655.6)"/><rect x="810.00" y="651.10" width="1.80" height="9.00" rx="0.4" transform="rotate(135.0 810.9 655.6)"/><rect x="810.00" y="651.10" width="1.80" height="9.00" rx="0.4" transform="rotate(180.0 810.9 655.6)"/><rect x="810.00" y="651.10" width="1.80" height="9.00" rx="0.4" transform="rotate(225.0 810.9 655.6)"/><rect x="810.00" y="651.10" width="1.80" height="9.00" rx="0.4" transform="rotate(270.0 810.9 655.6)"/><rect x="810.00" y="651.10" width="1.80" height="9.00" rx="0.4" transform="rotate(315.0 810.9 655.6)"/></g><circle cx="810.9" cy="655.6" r="2.10" fill="#fff"/><g fill="#3d4048"><circle cx="805.3" cy="661.2" r="2.10"/><rect x="804.70" y="658.40" width="1.20" height="5.60" rx="0.4" transform="rotate(0.0 805.3 661.2)"/><rect x="804.70" y="658.40" width="1.20" height="5.60" rx="0.4" transform="rotate(60.0 805.3 661.2)"/><rect x="804.70" y="658.40" width="1.20" height="5.60" rx="0.4" transform="rotate(120.0 805.3 661.2)"/><rect x="804.70" y="658.40" width="1.20" height="5.60" rx="0.4" transform="rotate(180.0 805.3 661.2)"/><rect x="804.70" y="658.40" width="1.20" height="5.60" rx="0.4" transform="rotate(240.0 805.3 661.2)"/><rect x="804.70" y="658.40" width="1.20" height="5.60" rx="0.4" transform="rotate(300.0 805.3 661.2)"/></g><circle cx="805.3" cy="661.2" r="0.90" fill="#fff"/><rect x="54" y="703" width="821" height="1" fill="#e3e3e6"/><g fill="#3d4048"><circle cx="810.9" cy="688.6" r="3.90"/><rect x="810.00" y="684.10" width="1.80" height="9.00" rx="0.4" transform="rotate(0.0 810.9 688.6)"/><rect x="810.00" y="684.10" width="1.80" height="9.00" rx="0.4" transform="rotate(45.0 810.9 688.6)"/><rect x="810.00" y="684.10" width="1.80" height="9.00" rx="0.4" transform="rotate(90.0 810.9 688.6)"/><rect x="810.00" y="684.10" width="1.80" height="9.00" rx="0.4" transform="rotate(135.0 810.9 688.6)"/><rect x="810.00" y="684.10" width="1.80" height="9.00" rx="0.4" transform="rotate(180.0 810.9 688.6)"/><rect x="810.00" y="684.10" width="1.80" height="9.00" rx="0.4" transform="rotate(225.0 810.9 688.6)"/><rect x="810.00" y="684.10" width="1.80" height="9.00" rx="0.4" transform="rotate(270.0 810.9 688.6)"/><rect x="810.00" y="684.10" width="1.80" height="9.00" rx="0.4" transform="rotate(315.0 810.9 688.6)"/></g><circle cx="810.9" cy="688.6" r="2.10" fill="#fff"/><g fill="#3d4048"><circle cx="805.3" cy="694.2" r="2.10"/><rect x="804.70" y="691.40" width="1.20" height="5.60" rx="0.4" transform="rotate(0.0 805.3 694.2)"/><rect x="804.70" y="691.40" width="1.20" height="5.60" rx="0.4" transform="rotate(60.0 805.3 694.2)"/><rect x="804.70" y="691.40" width="1.20" height="5.60" rx="0.4" transform="rotate(120.0 805.3 694.2)"/><rect x="804.70" y="691.40" width="1.20" height="5.60" rx="0.4" transform="rotate(180.0 805.3 694.2)"/><rect x="804.70" y="691.40" width="1.20" height="5.60" rx="0.4" transform="rotate(240.0 805.3 694.2)"/><rect x="804.70" y="691.40" width="1.20" height="5.60" rx="0.4" transform="rotate(300.0 805.3 694.2)"/></g><circle cx="805.3" cy="694.2" r="0.90" fill="#fff"/><rect x="54" y="736" width="821" height="1" fill="#e3e3e6"/><g fill="#3d4048"><circle cx="810.9" cy="721.6" r="3.90"/><rect x="810.00" y="717.10" width="1.80" height="9.00" rx="0.4" transform="rotate(0.0 810.9 721.6)"/><rect x="810.00" y="717.10" width="1.80" height="9.00" rx="0.4" transform="rotate(45.0 810.9 721.6)"/><rect x="810.00" y="717.10" width="1.80" height="9.00" rx="0.4" transform="rotate(90.0 810.9 721.6)"/><rect x="810.00" y="717.10" width="1.80" height="9.00" rx="0.4" transform="rotate(135.0 810.9 721.6)"/><rect x="810.00" y="717.10" width="1.80" height="9.00" rx="0.4" transform="rotate(180.0 810.9 721.6)"/><rect x="810.00" y="717.10" width="1.80" height="9.00" rx="0.4" transform="rotate(225.0 810.9 721.6)"/><rect x="810.00" y="717.10" width="1.80" height="9.00" rx="0.4" transform="rotate(270.0 810.9 721.6)"/><rect x="810.00" y="717.10" width="1.80" height="9.00" rx="0.4" transform="rotate(315.0 810.9 721.6)"/></g><circle cx="810.9" cy="721.6" r="2.10" fill="#fff"/><g fill="#3d4048"><circle cx="805.3" cy="727.2" r="2.10"/><rect x="804.70" y="724.40" width="1.20" height="5.60" rx="0.4" transform="rotate(0.0 805.3 727.2)"/><rect x="804.70" y="724.40" width="1.20" height="5.60" rx="0.4" transform="rotate(60.0 805.3 727.2)"/><rect x="804.70" y="724.40" width="1.20" height="5.60" rx="0.4" transform="rotate(120.0 805.3 727.2)"/><rect x="804.70" y="724.40" width="1.20" height="5.60" rx="0.4" transform="rotate(180.0 805.3 727.2)"/><rect x="804.70" y="724.40" width="1.20" height="5.60" rx="0.4" transform="rotate(240.0 805.3 727.2)"/><rect x="804.70" y="724.40" width="1.20" height="5.60" rx="0.4" transform="rotate(300.0 805.3 727.2)"/></g><circle cx="805.3" cy="727.2" r="0.90" fill="#fff"/><rect x="54" y="769" width="821" height="1" fill="#e3e3e6"/><g fill="#3d4048"><circle cx="810.9" cy="754.6" r="3.90"/><rect x="810.00" y="750.10" width="1.80" height="9.00" rx="0.4" transform="rotate(0.0 810.9 754.6)"/><rect x="810.00" y="750.10" width="1.80" height="9.00" rx="0.4" transform="rotate(45.0 810.9 754.6)"/><rect x="810.00" y="750.10" width="1.80" height="9.00" rx="0.4" transform="rotate(90.0 810.9 754.6)"/><rect x="810.00" y="750.10" width="1.80" height="9.00" rx="0.4" transform="rotate(135.0 810.9 754.6)"/><rect x="810.00" y="750.10" width="1.80" height="9.00" rx="0.4" transform="rotate(180.0 810.9 754.6)"/><rect x="810.00" y="750.10" width="1.80" height="9.00" rx="0.4" transform="rotate(225.0 810.9 754.6)"/><rect x="810.00" y="750.10" width="1.80" height="9.00" rx="0.4" transform="rotate(270.0 810.9 754.6)"/><rect x="810.00" y="750.10" width="1.80" height="9.00" rx="0.4" transform="rotate(315.0 810.9 754.6)"/></g><circle cx="810.9" cy="754.6" r="2.10" fill="#fff"/><g fill="#3d4048"><circle cx="805.3" cy="760.2" r="2.10"/><rect x="804.70" y="757.40" width="1.20" height="5.60" rx="0.4" transform="rotate(0.0 805.3 760.2)"/><rect x="804.70" y="757.40" width="1.20" height="5.60" rx="0.4" transform="rotate(60.0 805.3 760.2)"/><rect x="804.70" y="757.40" width="1.20" height="5.60" rx="0.4" transform="rotate(120.0 805.3 760.2)"/><rect x="804.70" y="757.40" width="1.20" height="5.60" rx="0.4" transform="rotate(180.0 805.3 760.2)"/><rect x="804.70" y="757.40" width="1.20" height="5.60" rx="0.4" transform="rotate(240.0 805.3 760.2)"/><rect x="804.70" y="757.40" width="1.20" height="5.60" rx="0.4" transform="rotate(300.0 805.3 760.2)"/></g><circle cx="805.3" cy="760.2" r="0.90" fill="#fff"/><rect x="54" y="802" width="821" height="1" fill="#e3e3e6"/><g fill="#3d4048"><circle cx="810.9" cy="787.6" r="3.90"/><rect x="810.00" y="783.10" width="1.80" height="9.00" rx="0.4" transform="rotate(0.0 810.9 787.6)"/><rect x="810.00" y="783.10" width="1.80" height="9.00" rx="0.4" transform="rotate(45.0 810.9 787.6)"/><rect x="810.00" y="783.10" width="1.80" height="9.00" rx="0.4" transform="rotate(90.0 810.9 787.6)"/><rect x="810.00" y="783.10" width="1.80" height="9.00" rx="0.4" transform="rotate(135.0 810.9 787.6)"/><rect x="810.00" y="783.10" width="1.80" height="9.00" rx="0.4" transform="rotate(180.0 810.9 787.6)"/><rect x="810.00" y="783.10" width="1.80" height="9.00" rx="0.4" transform="rotate(225.0 810.9 787.6)"/><rect x="810.00" y="783.10" width="1.80" height="9.00" rx="0.4" transform="rotate(270.0 810.9 787.6)"/><rect x="810.00" y="783.10" width="1.80" height="9.00" rx="0.4" transform="rotate(315.0 810.9 787.6)"/></g><circle cx="810.9" cy="787.6" r="2.10" fill="#fff"/><g fill="#3d4048"><circle cx="805.3" cy="793.2" r="2.10"/><rect x="804.70" y="790.40" width="1.20" height="5.60" rx="0.4" transform="rotate(0.0 805.3 793.2)"/><rect x="804.70" y="790.40" width="1.20" height="5.60" rx="0.4" transform="rotate(60.0 805.3 793.2)"/><rect x="804.70" y="790.40" width="1.20" height="5.60" rx="0.4" transform="rotate(120.0 805.3 793.2)"/><rect x="804.70" y="790.40" width="1.20" height="5.60" rx="0.4" transform="rotate(180.0 805.3 793.2)"/><rect x="804.70" y="790.40" width="1.20" height="5.60" rx="0.4" transform="rotate(240.0 805.3 793.2)"/><rect x="804.70" y="790.40" width="1.20" height="5.60" rx="0.4" transform="rotate(300.0 805.3 793.2)"/></g><circle cx="805.3" cy="793.2" r="0.90" fill="#fff"/><rect x="54" y="835" width="821" height="1" fill="#e3e3e6"/><g fill="#3d4048"><circle cx="810.9" cy="820.6" r="3.90"/><rect x="810.00" y="816.10" width="1.80" height="9.00" rx="0.4" transform="rotate(0.0 810.9 820.6)"/><rect x="810.00" y="816.10" width="1.80" height="9.00" rx="0.4" transform="rotate(45.0 810.9 820.6)"/><rect x="810.00" y="816.10" width="1.80" height="9.00" rx="0.4" transform="rotate(90.0 810.9 820.6)"/><rect x="810.00" y="816.10" width="1.80" height="9.00" rx="0.4" transform="rotate(135.0 810.9 820.6)"/><rect x="810.00" y="816.10" width="1.80" height="9.00" rx="0.4" transform="rotate(180.0 810.9 820.6)"/><rect x="810.00" y="816.10" width="1.80" height="9.00" rx="0.4" transform="rotate(225.0 810.9 820.6)"/><rect x="810.00" y="816.10" width="1.80" height="9.00" rx="0.4" transform="rotate(270.0 810.9 820.6)"/><rect x="810.00" y="816.10" width="1.80" height="9.00" rx="0.4" transform="rotate(315.0 810.9 820.6)"/></g><circle cx="810.9" cy="820.6" r="2.10" fill="#fff"/><g fill="#3d4048"><circle cx="805.3" cy="826.2" r="2.10"/><rect x="804.70" y="823.40" width="1.20" height="5.60" rx="0.4" transform="rotate(0.0 805.3 826.2)"/><rect x="804.70" y="823.40" width="1.20" height="5.60" rx="0.4" transform="rotate(60.0 805.3 826.2)"/><rect x="804.70" y="823.40" width="1.20" height="5.60" rx="0.4" transform="rotate(120.0 805.3 826.2)"/><rect x="804.70" y="823.40" width="1.20" height="5.60" rx="0.4" transform="rotate(180.0 805.3 826.2)"/><rect x="804.70" y="823.40" width="1.20" height="5.60" rx="0.4" transform="rotate(240.0 805.3 826.2)"/><rect x="804.70" y="823.40" width="1.20" height="5.60" rx="0.4" transform="rotate(300.0 805.3 826.2)"/></g><circle cx="805.3" cy="826.2" r="0.90" fill="#fff"/><rect x="54" y="868" width="821" height="1" fill="#e3e3e6"/><g fill="#3d4048"><circle cx="810.9" cy="853.6" r="3.90"/><rect x="810.00" y="849.10" width="1.80" height="9.00" rx="0.4" transform="rotate(0.0 810.9 853.6)"/><rect x="810.00" y="849.10" width="1.80" height="9.00" rx="0.4" transform="rotate(45.0 810.9 853.6)"/><rect x="810.00" y="849.10" width="1.80" height="9.00" rx="0.4" transform="rotate(90.0 810.9 853.6)"/><rect x="810.00" y="849.10" width="1.80" height="9.00" rx="0.4" transform="rotate(135.0 810.9 853.6)"/><rect x="810.00" y="849.10" width="1.80" height="9.00" rx="0.4" transform="rotate(180.0 810.9 853.6)"/><rect x="810.00" y="849.10" width="1.80" height="9.00" rx="0.4" transform="rotate(225.0 810.9 853.6)"/><rect x="810.00" y="849.10" width="1.80" height="9.00" rx="0.4" transform="rotate(270.0 810.9 853.6)"/><rect x="810.00" y="849.10" width="1.80" height="9.00" rx="0.4" transform="rotate(315.0 810.9 853.6)"/></g><circle cx="810.9" cy="853.6" r="2.10" fill="#fff"/><g fill="#3d4048"><circle cx="805.3" cy="859.2" r="2.10"/><rect x="804.70" y="856.40" width="1.20" height="5.60" rx="0.4" transform="rotate(0.0 805.3 859.2)"/><rect x="804.70" y="856.40" width="1.20" height="5.60" rx="0.4" transform="rotate(60.0 805.3 859.2)"/><rect x="804.70" y="856.40" width="1.20" height="5.60" rx="0.4" transform="rotate(120.0 805.3 859.2)"/><rect x="804.70" y="856.40" width="1.20" height="5.60" rx="0.4" transform="rotate(180.0 805.3 859.2)"/><rect x="804.70" y="856.40" width="1.20" height="5.60" rx="0.4" transform="rotate(240.0 805.3 859.2)"/><rect x="804.70" y="856.40" width="1.20" height="5.60" rx="0.4" transform="rotate(300.0 805.3 859.2)"/></g><circle cx="805.3" cy="859.2" r="0.90" fill="#fff"/><rect x="54" y="901" width="821" height="1" fill="#e3e3e6"/><g fill="#3d4048"><circle cx="810.9" cy="886.6" r="3.90"/><rect x="810.00" y="882.10" width="1.80" height="9.00" rx="0.4" transform="rotate(0.0 810.9 886.6)"/><rect x="810.00" y="882.10" width="1.80" height="9.00" rx="0.4" transform="rotate(45.0 810.9 886.6)"/><rect x="810.00" y="882.10" width="1.80" height="9.00" rx="0.4" transform="rotate(90.0 810.9 886.6)"/><rect x="810.00" y="882.10" width="1.80" height="9.00" rx="0.4" transform="rotate(135.0 810.9 886.6)"/><rect x="810.00" y="882.10" width="1.80" height="9.00" rx="0.4" transform="rotate(180.0 810.9 886.6)"/><rect x="810.00" y="882.10" width="1.80" height="9.00" rx="0.4" transform="rotate(225.0 810.9 886.6)"/><rect x="810.00" y="882.10" width="1.80" height="9.00" rx="0.4" transform="rotate(270.0 810.9 886.6)"/><rect x="810.00" y="882.10" width="1.80" height="9.00" rx="0.4" transform="rotate(315.0 810.9 886.6)"/></g><circle cx="810.9" cy="886.6" r="2.10" fill="#fff"/><g fill="#3d4048"><circle cx="805.3" cy="892.2" r="2.10"/><rect x="804.70" y="889.40" width="1.20" height="5.60" rx="0.4" transform="rotate(0.0 805.3 892.2)"/><rect x="804.70" y="889.40" width="1.20" height="5.60" rx="0.4" transform="rotate(60.0 805.3 892.2)"/><rect x="804.70" y="889.40" width="1.20" height="5.60" rx="0.4" transform="rotate(120.0 805.3 892.2)"/><rect x="804.70" y="889.40" width="1.20" height="5.60" rx="0.4" transform="rotate(180.0 805.3 892.2)"/><rect x="804.70" y="889.40" width="1.20" height="5.60" rx="0.4" transform="rotate(240.0 805.3 892.2)"/><rect x="804.70" y="889.40" width="1.20" height="5.60" rx="0.4" transform="rotate(300.0 805.3 892.2)"/></g><circle cx="805.3" cy="892.2" r="0.90" fill="#fff"/><rect x="54" y="571" width="821" height="1" fill="#e3e3e6"/></svg>
<div class="th" style="left:64px;top:539px;">Channel</div>
<svg class="abs" style="left:117px;top:545px" width="8" height="5" viewBox="0 0 8 5"><path d="M0.5 0.5 H7.5 L4 4 Z" fill="#1d2535"/></svg>
<div class="th" style="left:240px;top:539px;">ID</div>
<div class="th" style="left:326px;top:539px;">Last</div>
<div class="th" style="left:302px;top:554px;">Value</div>
<div class="th" style="left:472px;top:539px;">Minimum</div>
<div class="th" style="left:662px;top:539px;">Maximum</div>
<svg style="position:absolute;left:258px;top:538px" width="9" height="12" viewBox="0 0 9 12"><path d="M0.5 4.7 L4.4 0.7 L8.3 4.7 Z M0.5 6.5 L4.4 10.5 L8.3 6.5 Z" fill="#c9c9cc" stroke="#c9c9cc" stroke-width="0.6" stroke-linejoin="round"/></svg><svg style="position:absolute;left:340px;top:553px" width="9" height="12" viewBox="0 0 9 12"><path d="M0.5 4.7 L4.4 0.7 L8.3 4.7 Z M0.5 6.5 L4.4 10.5 L8.3 6.5 Z" fill="#c9c9cc" stroke="#c9c9cc" stroke-width="0.6" stroke-linejoin="round"/></svg><svg style="position:absolute;left:532px;top:538px" width="9" height="12" viewBox="0 0 9 12"><path d="M0.5 4.7 L4.4 0.7 L8.3 4.7 Z M0.5 6.5 L4.4 10.5 L8.3 6.5 Z" fill="#c9c9cc" stroke="#c9c9cc" stroke-width="0.6" stroke-linejoin="round"/></svg><svg style="position:absolute;left:724px;top:538px" width="9" height="12" viewBox="0 0 9 12"><path d="M0.5 4.7 L4.4 0.7 L8.3 4.7 Z M0.5 6.5 L4.4 10.5 L8.3 6.5 Z" fill="#c9c9cc" stroke="#c9c9cc" stroke-width="0.6" stroke-linejoin="round"/></svg>
<div class="tr" style="top:588px"><span class="c0">Bin Log Disk Usage</span><span class="c1">11</span><span class="c2" >< 0,01 MB</span><span class="c3">< 0,01 MB</span><span class="c4">< 0,01 MB</span></div>
<div class="tr" style="top:621px"><span class="c0">CPU Credit Balance</span><span class="c1">16</span><span class="c2" >144 #</span><span class="c3">144 #</span><span class="c4">144 #</span></div>
<div class="tr" style="top:654px"><span class="c0">CPU Credit Usage</span><span class="c1">15</span><span class="c2" >0,16 #</span><span class="c3">0,15 #</span><span class="c4">0,16 #</span></div>
<div class="tr" style="top:687px"><span class="c0">CPU Utilization</span><span class="c1">0</span><span class="c2" >0 %</span><span class="c3">2,62 %</span><span class="c4">4 %</span></div>
<div class="tr" style="top:720px"><span class="c0">Database Connections</span><span class="c1">1</span><span class="c2" >0 #</span><span class="c3">0 #</span><span class="c4">0 #</span></div>
<div class="tr" style="top:753px"><span class="c0">Disk Queue Depth</span><span class="c1">12</span><span class="c2" >< 0,01 #</span><span class="c3">0 #</span><span class="c4">< 0,01 #</span></div>
<div class="tr" style="top:786px"><span class="c0">Downtime</span><span class="c1">-4</span><span class="c2" ></span><span class="c3"></span><span class="c4"></span></div>
<div class="tr" style="top:819px"><span class="c0">Free Storage Space</span><span class="c1">3</span><span class="c2" style="left:288px;right:auto">19.385 …</span><span class="c3">19.385 MB</span><span class="c4">19.385 MB</span></div>
<div class="tr" style="top:852px"><span class="c0">Freeable Memory</span><span class="c1">2</span><span class="c2" >370 MB</span><span class="c3">369 MB</span><span class="c4">370 MB</span></div>
<div class="tr" style="top:885px"><span class="c0">Network Receive Throu…</span><span class="c1">13</span><span class="c2" style="left:288px;right:auto">414 Byte…</span><span class="c3">404 Byte/s</span><span class="c4">658 Byte/s</span></div>
<div class="abs" style="left:895px;top:54px;width:2px;height:847px;background:#f7f7f7;"></div>
<div class="abs" style="left:0;top:899px;width:897px;height:2px;background:#f7f7f7;"></div>
</body></html>
